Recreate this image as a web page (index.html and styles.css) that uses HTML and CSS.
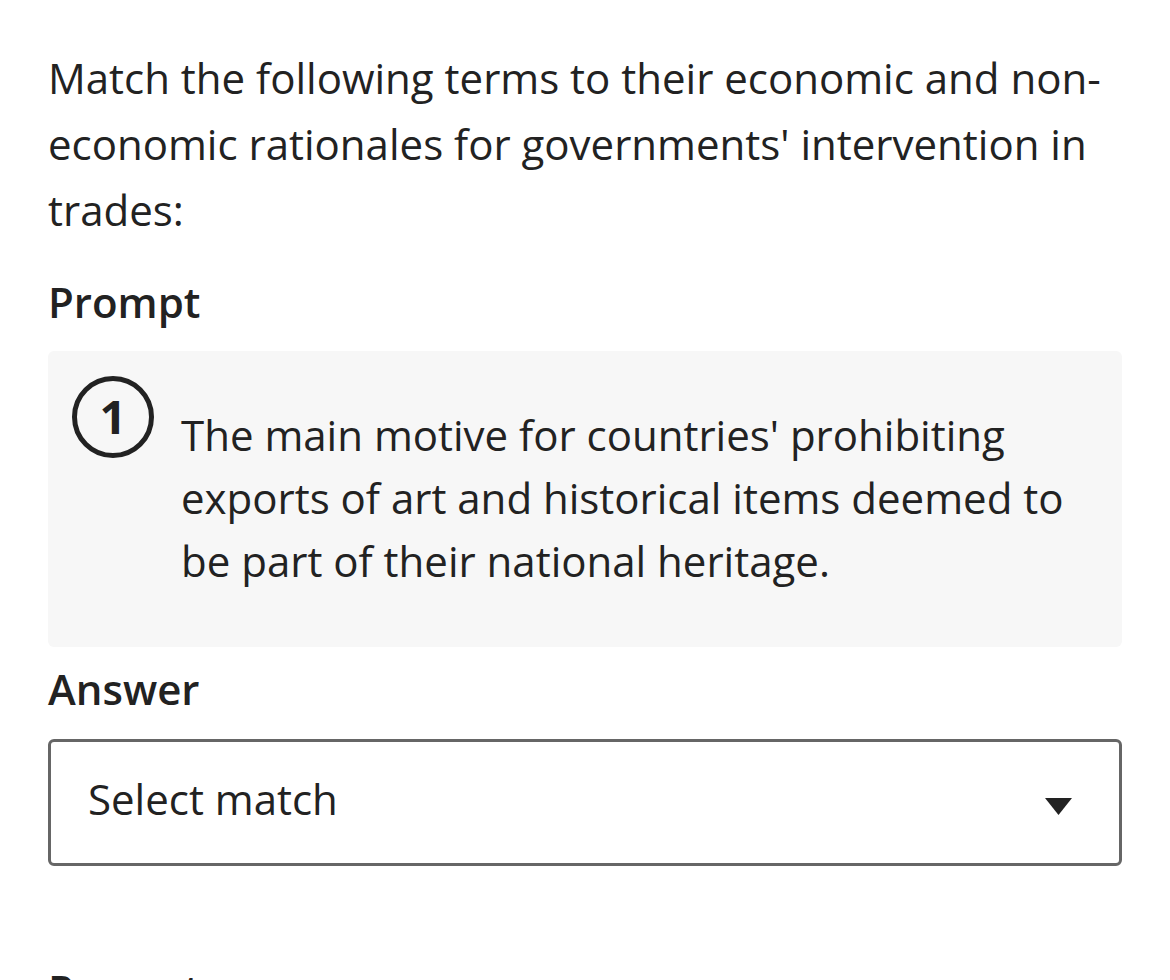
FILE: index.html
```html
<!DOCTYPE html>
<html lang="en">
<head>
<meta charset="utf-8">
<title>Matching question</title>
<link rel="stylesheet" href="styles.css">
</head>
<body>
<main class="page">
  <p class="question">Match the following terms to their economic and non-economic rationales for governments' intervention in trades:</p>

  <section class="pair">
    <h2 class="label label-prompt">Prompt</h2>
    <div class="prompt-box">
      <span class="num">1</span>
      <p class="prompt-text">The main motive for countries' prohibiting exports of art and historical items deemed to be part of their national heritage.</p>
    </div>
    <h2 class="label label-answer">Answer</h2>
    <div class="select" role="combobox" aria-expanded="false">
      <span class="select-text">Select match</span>
      <svg class="caret" width="27" height="17" viewBox="0 0 27 17" aria-hidden="true"><path d="M0 0 H27 L13.5 17 Z" fill="#222"/></svg>
    </div>
  </section>

  <section class="pair">
    <h2 class="label label-next">Prompt</h2>
  </section>
</main>
</body>
</html>
```
FILE: styles.css
```css
html, body {
  margin: 0;
  padding: 0;
  background: #ffffff;
}

body {
  font-family: "Open Sans", "Noto Sans", sans-serif;
  color: #222222;
}

.page {
  padding: 0 48px;
}

.question {
  margin: 45px 0 0;
  font-size: 42px;
  line-height: 66px;
  font-weight: 400;
}

.label {
  margin: 0;
  font-size: 42px;
  line-height: 54px;
  font-weight: 600;
}

.label-prompt {
  margin-top: 32px;
}

.label-answer {
  margin-top: 15px;
}

.label-next {
  margin-top: 97px;
}

.prompt-box {
  margin-top: 22px;
  background: #f7f7f7;
  border-radius: 6px;
  padding: 25px 24px 24px;
  display: flex;
  align-items: flex-start;
}

.num {
  flex: 0 0 auto;
  box-sizing: border-box;
  width: 82px;
  height: 82px;
  border: 5px solid #222222;
  border-radius: 50%;
  display: flex;
  align-items: center;
  justify-content: center;
  font-size: 47px;
  font-weight: 700;
  line-height: 1;
  padding-bottom: 2px;
}

.prompt-text {
  margin: 27px 0 31px 27px;
  font-size: 42px;
  line-height: 63px;
}

.select {
  margin-top: 23px;
  box-sizing: border-box;
  height: 127px;
  border: 3px solid #666666;
  border-radius: 6px;
  background: #ffffff;
  display: flex;
  align-items: center;
  justify-content: space-between;
  padding: 0 47px 0 37px;
}

.select-text {
  font-size: 42px;
  line-height: 63px;
  margin-bottom: 8px;
}

.caret {
  display: block;
  margin-top: 8px;
}
```
